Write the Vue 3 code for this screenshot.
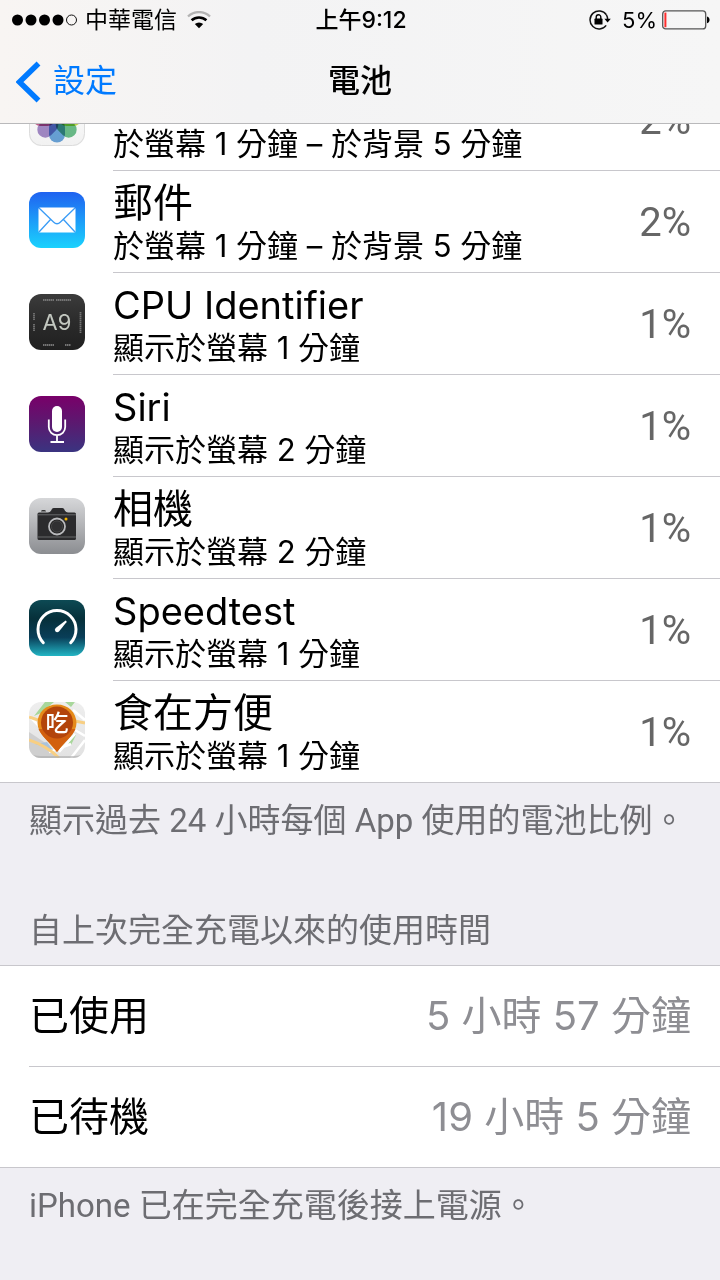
<template>
  <div class="screen" lang="zh-Hant">
    <header class="top">
      <div class="status">
        <div class="status-side">
          <svg class="signal" viewBox="0 0 65 14" aria-hidden="true">
            <circle v-for="n in 4" :key="n" :cx="n * 13.5 - 8" cy="7" r="5.5" />
            <circle cx="59.5" cy="7" r="5" fill="none" stroke="#111" stroke-width="1" />
          </svg>
          <span class="carrier">中華電信</span>
          <svg class="wifi" viewBox="0 0 24 18" aria-hidden="true">
            <path d="M1 5.5a16 16 0 0 1 22 0" fill="none" stroke="#b3b3b3" stroke-width="2.4" />
            <path d="M4.6 9.3a11 11 0 0 1 14.8 0" fill="none" stroke="#000" stroke-width="2.6" />
            <path d="M12 17.2l-4.2-4.1a6 6 0 0 1 8.4 0z" />
          </svg>
        </div>
        <span class="clock">上午9:12</span>
        <div class="status-side right">
          <svg class="lock" viewBox="0 0 24 20" aria-hidden="true">
            <path d="M18.4 4.8A9 9 0 1 0 18.2 15.4" fill="none" stroke="#111" stroke-width="1.5" />
            <path d="M18.4 4.8A9 9 0 0 1 19.6 9" fill="none" stroke="#111" stroke-width="1.5" />
            <path d="M16.4 8.8h6.4l-3.2 3.8z" />
            <rect x="6.5" y="8.6" width="8" height="6" rx="0.6" />
            <path d="M8.2 9V7a2.3 2.3 0 0 1 4.6 0v2" fill="none" stroke="#000" stroke-width="1.4" />
          </svg>
          <span class="level">5%</span>
          <svg class="battery" viewBox="0 0 48 20" aria-hidden="true">
            <rect x="0.7" y="0.9" width="43" height="18" rx="3" fill="none" stroke="#555" stroke-width="1.3" />
            <rect x="2.4" y="2.6" width="2" height="14.6" fill="#ff2d2d" />
            <path d="M45 6.6c3.4 0.6 3.4 6 0 6.6z" />
          </svg>
        </div>
      </div>
      <nav class="nav">
        <a class="back" href="#">
          <svg viewBox="0 0 25 42" aria-hidden="true">
            <path d="M22.5 2.5L3.5 21l19 18.5" fill="none" stroke="#007aff" stroke-width="5.5" />
          </svg>
          <span>設定</span>
        </a>
        <h1>電池</h1>
      </nav>
    </header>

    <main>
      <ul class="apps">
        <li v-for="app in apps" :key="app.id" class="app">
          <svg class="icon" viewBox="0 0 56 56" aria-hidden="true">
            <defs>
              <linearGradient :id="app.id + '-bg'" x1="0" y1="0" x2="0" y2="1">
                <stop v-for="(color, i) in app.colors" :key="i" :offset="i / (app.colors.length - 1)" :stop-color="color" />
              </linearGradient>
              <clipPath :id="app.id + '-clip'"><rect width="56" height="56" rx="12" /></clipPath>
            </defs>
            <rect width="56" height="56" rx="12" :fill="`url(#${app.id}-bg)`" />

            <g v-if="app.id === 'photos'">
              <rect x="0.5" y="0.5" width="55" height="55" rx="12" fill="none" stroke="#dcdcdc" />
              <rect
                v-for="(petal, i) in petals"
                :key="petal"
                class="petal"
                x="20"
                y="3.5"
                width="16"
                height="23"
                rx="8"
                :fill="petal"
                :transform="`rotate(${i * 45} 28 28)`"
              />
            </g>

            <g v-else-if="app.id === 'mail'">
              <rect x="9.5" y="15.5" width="37" height="25" rx="1.5" fill="#fff" />
              <path
                d="M10 16l14.5 14q3.5 3.5 7 0L46 16M10 40l11.5-12.5M46 40L34.5 27.5"
                fill="none"
                stroke="#3a9cf6"
                stroke-width="1.3"
              />
            </g>

            <g v-else-if="app.id === 'cpu'">
              <text class="chip" x="28" y="36" text-anchor="middle">A9</text>
              <path
                d="M14 6h11M27 6h15M14 51h11M36 51h6M5 19v7M5 30v7M51.5 18v21"
                fill="none"
                stroke="#747474"
                stroke-width="1.8"
                stroke-dasharray="1.5 0.5"
              />
            </g>

            <g v-else-if="app.id === 'siri'" fill="none" stroke="#fff" stroke-width="1.8">
              <rect x="23" y="10" width="10" height="26" rx="5" fill="#fff" stroke="none" />
              <path d="M19.8 23.5v7.5a8.2 8.2 0 0 0 16.4 0v-7.5M28 39.5v6.5M21.5 46h13.5" />
            </g>

            <g v-else-if="app.id === 'camera'">
              <path d="M12 13.5q0-1.5 1.5-1.5h2q1.5 0 1.5 1.5z" fill="#333" />
              <path
                d="M8.5 16q0-1.5 1.5-1.5h9q2 0 3-1.8l0.8-1.4q0.6-1.3 2.2-1.3h8q1.6 0 2.2 1.3l0.8 1.4q1 1.8 3 1.8h6.5q1.5 0 1.5 1.5v24.5q0 1.5-1.5 1.5h-35.5q-1.5 0-1.5-1.5z"
                fill="#2b2b2d"
              />
              <path d="M8.5 16.8h38.5M8.5 39h38.5" stroke="#77787a" stroke-width="0.8" />
              <circle cx="28" cy="28.5" r="8" fill="#252526" stroke="#b9babd" stroke-width="1.8" />
              <circle cx="28" cy="28.5" r="5.6" fill="#303032" stroke="#555" stroke-width="0.6" />
              <circle cx="37" cy="21" r="1.5" fill="#f4b400" />
            </g>

            <g v-else-if="app.id === 'speedtest'">
              <path d="M14.3 42.7a19 19 0 1 1 27.4 0" fill="none" stroke="#fff" stroke-width="3" stroke-linecap="round" />
              <path d="M36.6 20.6q1.6 0.4 0.8 1.7l-7.4 9.2q-2 1.6-3.5 0t0.2-3.4z" fill="#fff" />
            </g>

            <g v-else :clip-path="`url(#${app.id}-clip)`">
              <path d="M0 30l18 12 10 14H0z" fill="#cfcfcf" />
              <path d="M5 14L16 0h9l-13 11zM36 0h10l-4 5zM39 42l5-10 3 1-5 10z" fill="#a8d79b" />
              <path d="M0 14l10 10M44 8l12 10M20 50l22-8M42 56l14-18M30 50l16-18M46 28l10 6" stroke="#fff" stroke-width="2.5" />
              <path d="M6 42l12-2 6 8z" fill="#a9c3dd" />
              <path d="M0 15l9 3M46 19l10 2M0 38q18 6 30 18" fill="none" stroke="#f8cf82" stroke-width="3" />
              <path d="M0 50q2 4 12 4h32q10 0 12-4v6H0z" fill="#aaa" opacity="0.6" />
              <path d="M28 2.5c11 0 19.5 8 19.5 18.5C47.5 31 38 37 28 50 18 37 8.5 31 8.5 21 8.5 10.5 17 2.5 28 2.5z" fill="#e58a1a" />
              <path d="M9.5 27C13 35 20 39 28 50c8-11 15-15 18.5-23z" fill="#d2600f" />
              <circle cx="28" cy="20.5" r="16" fill="#b3440b" />
              <text class="eat" x="28" y="29" text-anchor="middle">吃</text>
            </g>
          </svg>
          <div class="app-body">
            <div class="app-text">
              <h2 :class="{ latin: isLatin(app.name) }">{{ app.name }}</h2>
              <p>{{ app.usage }}</p>
            </div>
            <span class="percent">{{ app.percent }}%</span>
          </div>
        </li>
      </ul>
      <p class="note">顯示過去 24 小時每個 App 使用的電池比例。</p>

      <h3 class="section-title">自上次完全充電以來的使用時間</h3>
      <dl class="times">
        <div v-for="item in times" :key="item.label" class="time">
          <dt>{{ item.label }}</dt>
          <dd>{{ item.value }}</dd>
        </div>
      </dl>
      <p class="note">iPhone 已在完全充電後接上電源。</p>
    </main>
  </div>
</template>

<script setup>
const apps = [
  { id: 'photos', name: '照片', usage: '於螢幕 1 分鐘 – 於背景 5 分鐘', percent: 2, colors: ['#ffffff', '#f1f1f1'] },
  { id: 'mail', name: '郵件', usage: '於螢幕 1 分鐘 – 於背景 5 分鐘', percent: 2, colors: ['#1f62f0', '#1d9bf8', '#1ad2fd'] },
  { id: 'cpu', name: 'CPU Identifier', usage: '顯示於螢幕 1 分鐘', percent: 1, colors: ['#3b3b3b', '#2b2b2b', '#202020'] },
  { id: 'siri', name: 'Siri', usage: '顯示於螢幕 2 分鐘', percent: 1, colors: ['#790069', '#5a1a70', '#3a3480'] },
  { id: 'camera', name: '相機', usage: '顯示於螢幕 2 分鐘', percent: 1, colors: ['#d6d7d9', '#b2b3b6', '#8b8d91'] },
  { id: 'speedtest', name: 'Speedtest', usage: '顯示於螢幕 1 分鐘', percent: 1, colors: ['#0d4a54', '#06303a', '#093e58', '#22b5c4'] },
  { id: 'eat', name: '食在方便', usage: '顯示於螢幕 1 分鐘', percent: 1, colors: ['#eeeeee', '#e2e2e2'] }
];

// 花瓣顏色，從上方順時針排列
const petals = ['#f7a14b', '#f3d040', '#c3d94a', '#6cc08b', '#6ba6dc', '#a58cc9', '#c4618f', '#ee6a5b'];

const times = [
  { label: '已使用', value: '5 小時 57 分鐘' },
  { label: '已待機', value: '19 小時 5 分鐘' }
];

// 英文名稱的字級略小
const isLatin = (name) => /^[\w\s]+$/.test(name);
</script>

<style>
body {
  margin: 0;
  background: #efeef3;
}
</style>

<style scoped>
.screen {
  min-height: 100vh;
  font-family: Inter, 'Noto Sans CJK TC', sans-serif;
  color: #000;
  background: #efeef3;
  white-space: nowrap;
}

h1,
h2,
h3,
p,
ul,
dl,
dd {
  margin: 0;
  padding: 0;
  font-weight: 400;
}

svg {
  display: block;
  flex: none;
}

/* 頂部 */
.top {
  position: relative;
  background: linear-gradient(90deg, #f8f5f3, #f3f3f4 35%, #f6f6f6);
  border-bottom: 1px solid #b9b9bb;
}

.status {
  display: grid;
  grid-template-columns: 1fr auto 1fr;
  align-items: center;
  height: 40px;
  padding: 0 10px 0 12px;
  font-size: 23px;
  line-height: 40px;
}

.status-side {
  display: flex;
  align-items: center;
}

.status-side.right {
  justify-content: flex-end;
}

.signal {
  width: 65px;
  height: 14px;
}

.carrier {
  margin: 0 10px 0 8px;
}

.wifi {
  width: 24px;
  height: 18px;
}

.clock {
  font-weight: 500;
}

.lock {
  width: 24px;
  height: 20px;
}

.level {
  margin: 0 5px 0 10px;
  font-size: 22px;
}

.battery {
  width: 48px;
  height: 20px;
}

.nav {
  display: grid;
  grid-template-columns: 1fr auto 1fr;
  align-items: center;
  padding: 0 16px;
  font-family: Roboto, 'Noto Sans CJK TC', sans-serif;
  line-height: 83px;
}

.back {
  display: flex;
  align-items: center;
  gap: 12px;
  font-size: 32px;
  color: #007aff;
  text-decoration: none;
}

.back svg {
  width: 25px;
  height: 42px;
}

.nav h1 {
  font-size: 32px;
  font-weight: 500;
}

/* App 列表 */
.apps {
  overflow: hidden;
  list-style: none;
  background: #fff;
  border-bottom: 1px solid #c8c7cc;
}

.app {
  display: flex;
  align-items: center;
  gap: 28px;
  padding-left: 29px;
}

/* 第一列捲到標題列後方 */
.app:first-child {
  margin-top: -55px;
}

.icon {
  width: 56px;
  height: 56px;
  margin-bottom: 4px;
}

.petal {
  mix-blend-mode: multiply;
}

.chip {
  font-size: 22px;
  fill: #c3c8c0;
}

.eat {
  font-size: 23px;
  font-weight: 500;
  fill: #fff;
}

.app-body {
  display: flex;
  flex: 1;
  align-items: center;
  justify-content: space-between;
  padding: 9px 29px 6px 0;
  border-bottom: 1px solid #c8c7cc;
}

.app:last-child .app-body {
  border-bottom: 0;
}

.app-text h2 {
  font-size: 40px;
  line-height: 46px;
}

.app-text h2.latin {
  font-size: 38px;
}

.app-text p {
  font-size: 31px;
  line-height: 40px;
}

.percent {
  font-family: Roboto, sans-serif;
  font-size: 40px;
  line-height: 46px;
  color: #666;
}

/* 說明文字 */
.note,
.section-title {
  padding: 16px 29px 0;
  font-family: Roboto, 'Noto Sans CJK TC', sans-serif;
  font-size: 33px;
  line-height: 44px;
  color: #6d6d72;
}

.section-title {
  padding: 66px 29px 12px;
}

/* 使用時間 */
.times {
  padding-left: 29px;
  background: #fff;
  border-top: 1px solid #c8c7cc;
  border-bottom: 1px solid #c8c7cc;
}

.time {
  display: flex;
  align-items: center;
  justify-content: space-between;
  padding-right: 29px;
  font-size: 40px;
  line-height: 100px;
}

.time + .time {
  border-top: 1px solid #c8c7cc;
}

.time dd {
  color: #8e8e93;
}
</style>
